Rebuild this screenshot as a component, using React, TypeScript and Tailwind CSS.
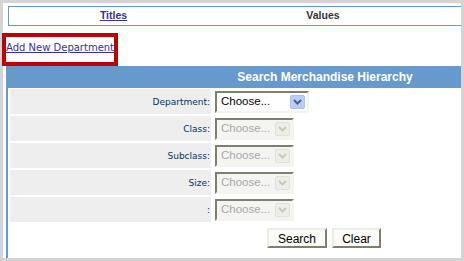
import { ReactNode } from "react";

const Chevron = ({ color }: { color: string }) => (
  <svg width="9" height="6" viewBox="0 0 9 6">
    <path d="M1 1 L4.5 4.5 L8 1" fill="none" stroke={color} strokeWidth="2" />
  </svg>
);

const FakeSelect = ({ disabled }: { disabled?: boolean }) => (
  <div
    className={`flex items-center h-[22px] border-2 border-t-[#7f7f70] border-l-[#7f7f70] border-r-[#f4f4ec] border-b-[#f4f4ec] ${
      disabled ? "w-[79px] bg-[#f4f4f2]" : "w-[94px] bg-white"
    }`}
  >
    <span
      className={`flex-1 pl-[4px] text-[11.5px] leading-none font-['Liberation_Sans',sans-serif] ${
        disabled ? "text-[#a8a8a8]" : "text-black"
      }`}
    >
      Choose...
    </span>
    <div
      className={`flex items-center justify-center w-[15px] h-[14px] mr-[2px] rounded-[2px] border ${
        disabled
          ? "bg-[#eeeee8] border-[#e0e0d8]"
          : "bg-[#b9cdf7] border-[#a8bff0]"
      }`}
    >
      <Chevron color={disabled ? "#c8c8c0" : "#4d6185"} />
    </div>
  </div>
);

const Row = ({ label, children }: { label: string; children: ReactNode }) => (
  <div className="flex gap-[2px] h-[25px]">
    <div className="w-[201px] bg-[#eeeeee] flex items-center justify-end pr-[1px] pt-[2px] text-[9px] text-[#003366] font-['DejaVu_Sans',sans-serif]">
      {label}
    </div>
    <div className="flex items-center pl-[2px]">{children}</div>
  </div>
);

const Btn = ({ label, w }: { label: string; w: string }) => (
  <button
    className={`${w} h-[20px] bg-[#fbfbf8] border-2 border-t-[#ecece4] border-l-[#ecece4] border-r-[#7f7f70] border-b-[#7f7f70] text-[12px] text-black pt-[2px] leading-none font-['Liberation_Sans',sans-serif]`}
  >
    {label}
  </button>
);

export default function App() {
  return (
    <div className="relative w-[464px] h-[261px] bg-[#d4d4d4] p-[3px]">
      <div className="w-[458px] h-[255px] bg-white overflow-hidden flex flex-col">
        <div className="mt-[3px] ml-[5px] w-[600px] h-[20px] shrink-0 border border-[#6699cc] flex items-center text-[10.5px] font-bold font-['Liberation_Sans',sans-serif]">
          <div className="w-[209px] text-center">
            <span className="text-[#333399] underline">Titles</span>
          </div>
          <div className="w-[210px] text-center text-[#333333]">Values</div>
        </div>

        <div className="h-[40px] shrink-0 pl-[3px] pt-[16px]">
          <a className="block w-fit text-[10px] leading-[12px] text-[#333399] underline font-['DejaVu_Sans',sans-serif]">
            Add New Department
          </a>
        </div>

        <div className="ml-[3px] w-[636px] flex-1 border-l-2 border-[#6699cc] flex flex-col">
          <div className="h-[22px] shrink-0 bg-[#6699cc] flex items-center justify-center text-white text-[12px] font-bold font-['Liberation_Sans',sans-serif]">
            Search Merchandise Hierarchy
          </div>
          <div className="pt-[1px] pl-[2px] flex flex-col gap-[2px]">
            <Row label="Department:">
              <FakeSelect />
            </Row>
            <Row label="Class:">
              <FakeSelect disabled />
            </Row>
            <Row label="Subclass:">
              <FakeSelect disabled />
            </Row>
            <Row label="Size:">
              <FakeSelect disabled />
            </Row>
            <Row label=":">
              <FakeSelect disabled />
            </Row>
          </div>
          <div className="mt-[6px] flex justify-center gap-[5px] pr-[2px]">
            <Btn label="Search" w="w-[60px]" />
            <Btn label="Clear" w="w-[49px]" />
          </div>
        </div>
      </div>
      <div className="absolute left-[2px] top-[33px] w-[116px] h-[33px] border-4 border-[#c00000]" />
    </div>
  );
}
